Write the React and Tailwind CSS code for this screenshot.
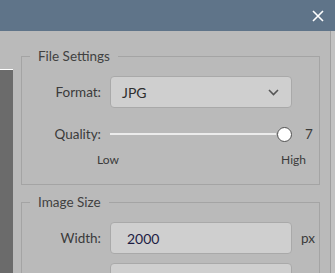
export default function App() {
  return (
    <div className="w-[335px] h-[273px] overflow-hidden bg-[#bababa] font-['Lato',sans-serif] text-[#3b3b3b] flex flex-col">
      <div className="h-[1px] bg-[#3c4149]" />
      <div className="h-[31px] bg-[#5f7489] flex items-center justify-end pr-[11px] shrink-0">
        <svg width="12" height="12" viewBox="0 0 12 12" className="text-white">
          <path d="M1 1L11 11M11 1L1 11" stroke="currentColor" strokeWidth="1.6" />
        </svg>
      </div>
      <div className="flex flex-1">
        <div className="w-[13px] mt-[38px] border-t border-white bg-[#6b6b6b]" />
        <div className="flex-1 pl-[8px] pr-[10px]">
          <fieldset className="mt-[17px] border border-[#a4a4a4] pb-[17px]">
            <legend className="ml-[8px] px-[8px] text-[13.5px] leading-[17px] text-[#414141]">File Settings</legend>
            <div className="flex items-center mt-[11px]">
              <span className="w-[79px] text-right text-[13.5px]">Format:</span>
              <div className="ml-[9px] w-[182px] h-[32px] rounded-[4px] border border-[#a9a9a9] bg-[#cfcfcf] flex items-center justify-between pl-[11px] pr-[12px]">
                <span className="text-[14px] text-[#2e2e2e]">JPG</span>
                <svg width="11" height="7" viewBox="0 0 11 7">
                  <path d="M1 1L5.5 5.5L10 1" fill="none" stroke="#555" strokeWidth="1.6" />
                </svg>
              </div>
            </div>
            <div className="flex items-center mt-[18px] h-[16px]">
              <span className="w-[79px] text-right text-[13.5px]">Quality:</span>
              <div className="ml-[9px] w-[182px] flex items-center">
                <div className="flex-1 h-[2px] bg-[#ececec]" />
                <div className="w-[15px] h-[15px] rounded-full bg-white border-[1.5px] border-[#505050] ml-[1px]" />
              </div>
              <span className="ml-[13px] text-[13.5px]">7</span>
            </div>
            <div className="flex justify-between mt-[10px] pl-[75px] pr-[13px] text-[12px] leading-[15px]">
              <span>Low</span>
              <span>High</span>
            </div>
          </fieldset>
          <fieldset className="mt-[9px] border border-[#a4a4a4] pb-[17px]">
            <legend className="ml-[8px] px-[8px] text-[13.5px] leading-[17px] text-[#414141]">Image Size</legend>
            <div className="flex items-center mt-[11px]">
              <span className="w-[79px] text-right text-[13.5px]">Width:</span>
              <div className="ml-[9px] w-[182px] h-[32px] rounded-[4px] border border-[#a9a9a9] bg-[#cfcfcf] flex items-center pl-[16px]">
                <span className="text-[14px] text-[#1d1d44]">2000</span>
              </div>
              <span className="ml-[9px] text-[13.5px]">px</span>
            </div>
            <div className="flex items-center mt-[9px]">
              <span className="w-[79px] text-right text-[13.5px]">Height:</span>
              <div className="ml-[9px] w-[182px] h-[32px] rounded-[4px] border border-[#a9a9a9] bg-[#cfcfcf] flex items-center pl-[16px]">
                <span className="text-[14px] text-[#1d1d44]">1067</span>
              </div>
              <span className="ml-[9px] text-[13.5px]">px</span>
            </div>
          </fieldset>
        </div>
        <div className="w-[1px] bg-[#9f9f9f]" />
        <div className="w-[4px] bg-[#c2c2c2]" />
      </div>
    </div>
  );
}
